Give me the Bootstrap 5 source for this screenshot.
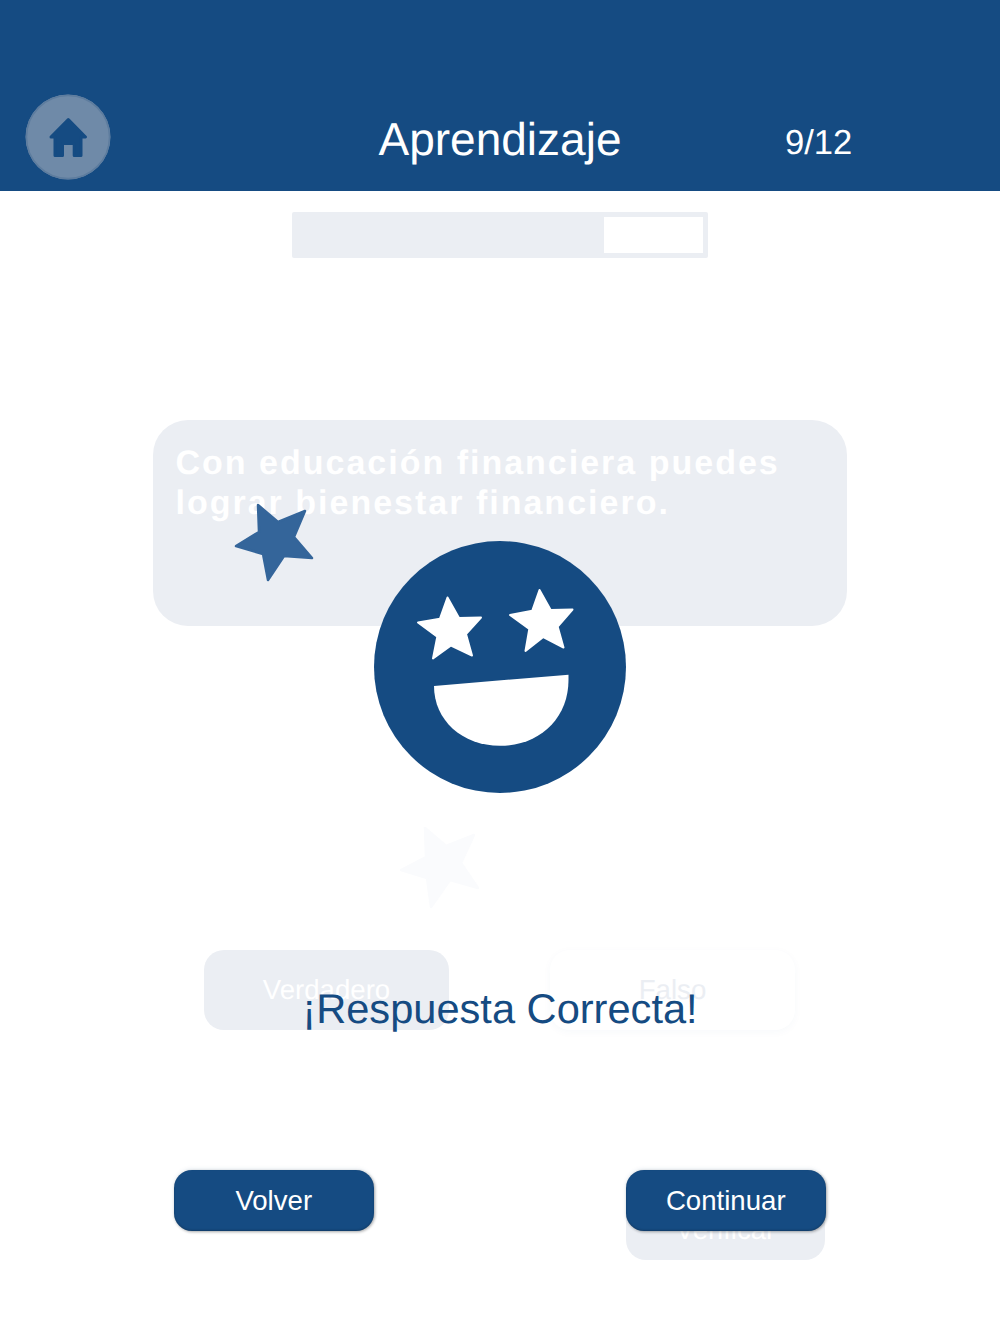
<!DOCTYPE html>
<html lang="es">
<head>
<meta charset="utf-8">
<title>Aprendizaje</title>
<link href="https://cdn.jsdelivr.net/npm/bootstrap@5.3.0/dist/css/bootstrap.min.css" rel="stylesheet">
<style>
html,body{margin:0;height:1334px;overflow:hidden;background:#fff;font-family:"Liberation Sans",Arial,sans-serif;text-rendering:geometricPrecision}
.stage{position:relative;width:1000px;height:1334px;overflow:hidden}
.top-band{height:190.5px;background:#154b82;color:#fff;padding-left:25px}
.home-wrap{width:86px;height:86px;margin-top:94px;flex:none}
.home-disc{width:86px;height:86px;display:block}
.band-title{position:absolute;left:0;width:1000px;top:108.5px;text-align:center;font-size:46px;line-height:60px}
.band-count{position:absolute;left:785px;top:121px;font-size:34.6px;line-height:44px}
.track{width:416px;height:46px;margin:21.5px 0 0 292px;background:#ebeef3;border-radius:2px;display:flex;justify-content:flex-end;padding:5px}
.track-gap{width:99px;height:36px;background:#fff}
.q-box{width:694px;height:205.5px;margin:162px auto 0;background:#ebeef3;border-radius:35px;padding:23px 22.5px;color:#fff;font-weight:700;font-size:34px;line-height:40px;letter-spacing:2px}
.ans-row{width:591px;margin:324.5px 0 0 204px;display:flex;justify-content:space-between}
.ans-btn{width:245px;height:80px;border-radius:20px;font-size:27.6px;display:flex;align-items:center;justify-content:center;border:0;padding:0}
.ans-true{background:#ebeef3;color:#fff}
.ans-false{background:#fff;color:#ebeef3;box-shadow:0 2px 9px rgba(22,76,131,.035)}
.verify-btn{width:199px;height:60px;margin:170px 0 0 626px;background:#ebeef3;color:#fff;border-radius:20px;font-size:27.5px;display:flex;align-items:center;justify-content:center}
.layer{position:absolute;left:0;top:0;width:1000px;height:1334px;pointer-events:none}
.fx{position:absolute;left:0;top:0;width:1000px;height:1334px}
.result-msg{position:absolute;left:0;width:1000px;top:984px;text-align:center;color:#154b82;font-size:41.6px;line-height:50px}
.act-row{position:absolute;top:1170px;left:174px;width:651.5px;display:flex;justify-content:space-between}
.act-btn{width:199.5px;height:61px;border:0;padding:0;border-radius:18px;background:#154b82;color:#fff;font-size:27.6px;display:flex;align-items:center;justify-content:center;box-shadow:inset 0 -1px 2px rgba(0,0,0,.22),1px 1px 3px rgba(0,0,0,.32),0 -1px 4px rgba(22,76,131,.1)}
</style>
</head>
<body>
<div class="stage">
  <div class="top-band d-flex align-items-start">
    <div class="home-wrap">
      <svg class="home-disc" viewBox="0 0 86 86" role="img" aria-label="Inicio">
        <circle cx="43" cy="43" r="42.5" fill="#6f8aa8"/>
        <circle cx="43" cy="43" r="41.5" fill="none" stroke="#5d7c9e" stroke-width="1.5"/>
        <path fill="#154b82" stroke="#154b82" stroke-width="3" stroke-linejoin="round" d="M43.3 25.5 L60.5 43 L56 43 L56 61.5 L49.2 61.5 L49.2 49.5 L37.5 49.5 L37.5 61.5 L30 61.5 L30 43 L26 43 Z"/>
      </svg>
    </div>
    <div class="band-title">Aprendizaje</div>
    <div class="band-count">9/12</div>
  </div>

  <div class="track"><div class="track-gap"></div></div>

  <div class="q-box">Con educación financiera puedes lograr bienestar financiero.</div>

  <div class="ans-row">
    <div class="ans-btn ans-true">Verdadero</div>
    <div class="ans-btn ans-false">Falso</div>
  </div>

  <div class="verify-btn">Verificar</div>

  <div class="layer">
    <svg class="fx" viewBox="0 0 1000 1334" aria-hidden="true">
      <g stroke-width="2.5" stroke-linejoin="round">
        <polygon fill="#34659a" stroke="#34659a" points="258,505 278,522 305,511 294,537 312,558 284,556 268,580 263,554 236,546 259,532"/>
        <polygon fill="#fafbfd" stroke="#fafbfd" points="425,828 446,846 474,835 461,863 478,888 450,880 431,907 427,878 401,870 426,857"/>
      </g>
      <circle cx="500" cy="667" r="126" fill="#154b82"/>
      <g stroke-width="2" stroke-linejoin="round" fill="#fff" stroke="#fff">
        <polygon points="447.5,597.5 459,618 481,617.5 466,634 472,655.5 451,645.5 433,658.5 437.3,636.7 418,622.5 440,618.7"/>
        <polygon points="539.5,590 550.7,610 572.5,609.5 557.7,626.7 563.5,647.5 543.3,637 525.5,651 529.3,629 510,615 532.3,610.7"/>
      </g>
      <path fill="#fff" d="M434 686 L568.5 674.7 L568.5 680 C568.5 718 540 745.8 500 745.8 C462 745.8 434 720 434 686 Z"/>
    </svg>
    <div class="result-msg">¡Respuesta Correcta!</div>
    <div class="act-row">
      <button class="act-btn" type="button">Volver</button>
      <button class="act-btn" type="button">Continuar</button>
    </div>
  </div>
</div>
<script src="https://cdn.jsdelivr.net/npm/bootstrap@5.3.0/dist/js/bootstrap.bundle.min.js"></script>
</body>
</html>
